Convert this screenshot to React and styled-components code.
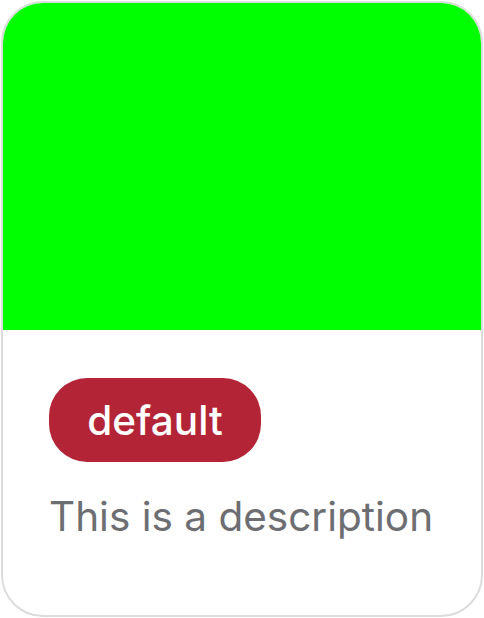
import React from "react";
import styled, { createGlobalStyle } from "styled-components";

const Global = createGlobalStyle`
  html, body { margin: 0; padding: 0; background: #ffffff; }
  body { font-family: Inter, "Noto Sans", sans-serif; }
`;

const Page = styled.div`
  padding: 1px;
`;

const Card = styled.div`
  box-sizing: border-box;
  width: 482px;
  height: 616px;
  border: 2px solid #dcdcdc;
  border-radius: 42px;
  overflow: hidden;
  background: #ffffff;
  display: flex;
  flex-direction: column;
`;

const Media = styled.div`
  height: 327px;
  background: #00ff00;
  flex-shrink: 0;
`;

const Body = styled.div`
  padding: 48px 30px 48px 46px;
  display: flex;
  flex-direction: column;
  align-items: flex-start;
  gap: 28px;
`;

const Badge = styled.span`
  display: inline-flex;
  align-items: center;
  justify-content: center;
  box-sizing: border-box;
  height: 84px;
  width: 212px;
  border-radius: 38px;
  background: ${(p) => p.$bg};
  color: #ffffff;
  font-size: 40.5px;
  font-weight: 500;
`;

const Description = styled.p`
  margin: 0;
  font-size: 40.5px;
  line-height: 54px;
  white-space: nowrap;
  color: #6d6e72;
`;

export default function App() {
  return (
    <Page>
      <Global />
      <Card>
        <Media />
        <Body>
          <Badge $bg="#b32536">default</Badge>
          <Description>This is a description</Description>
        </Body>
      </Card>
    </Page>
  );
}
